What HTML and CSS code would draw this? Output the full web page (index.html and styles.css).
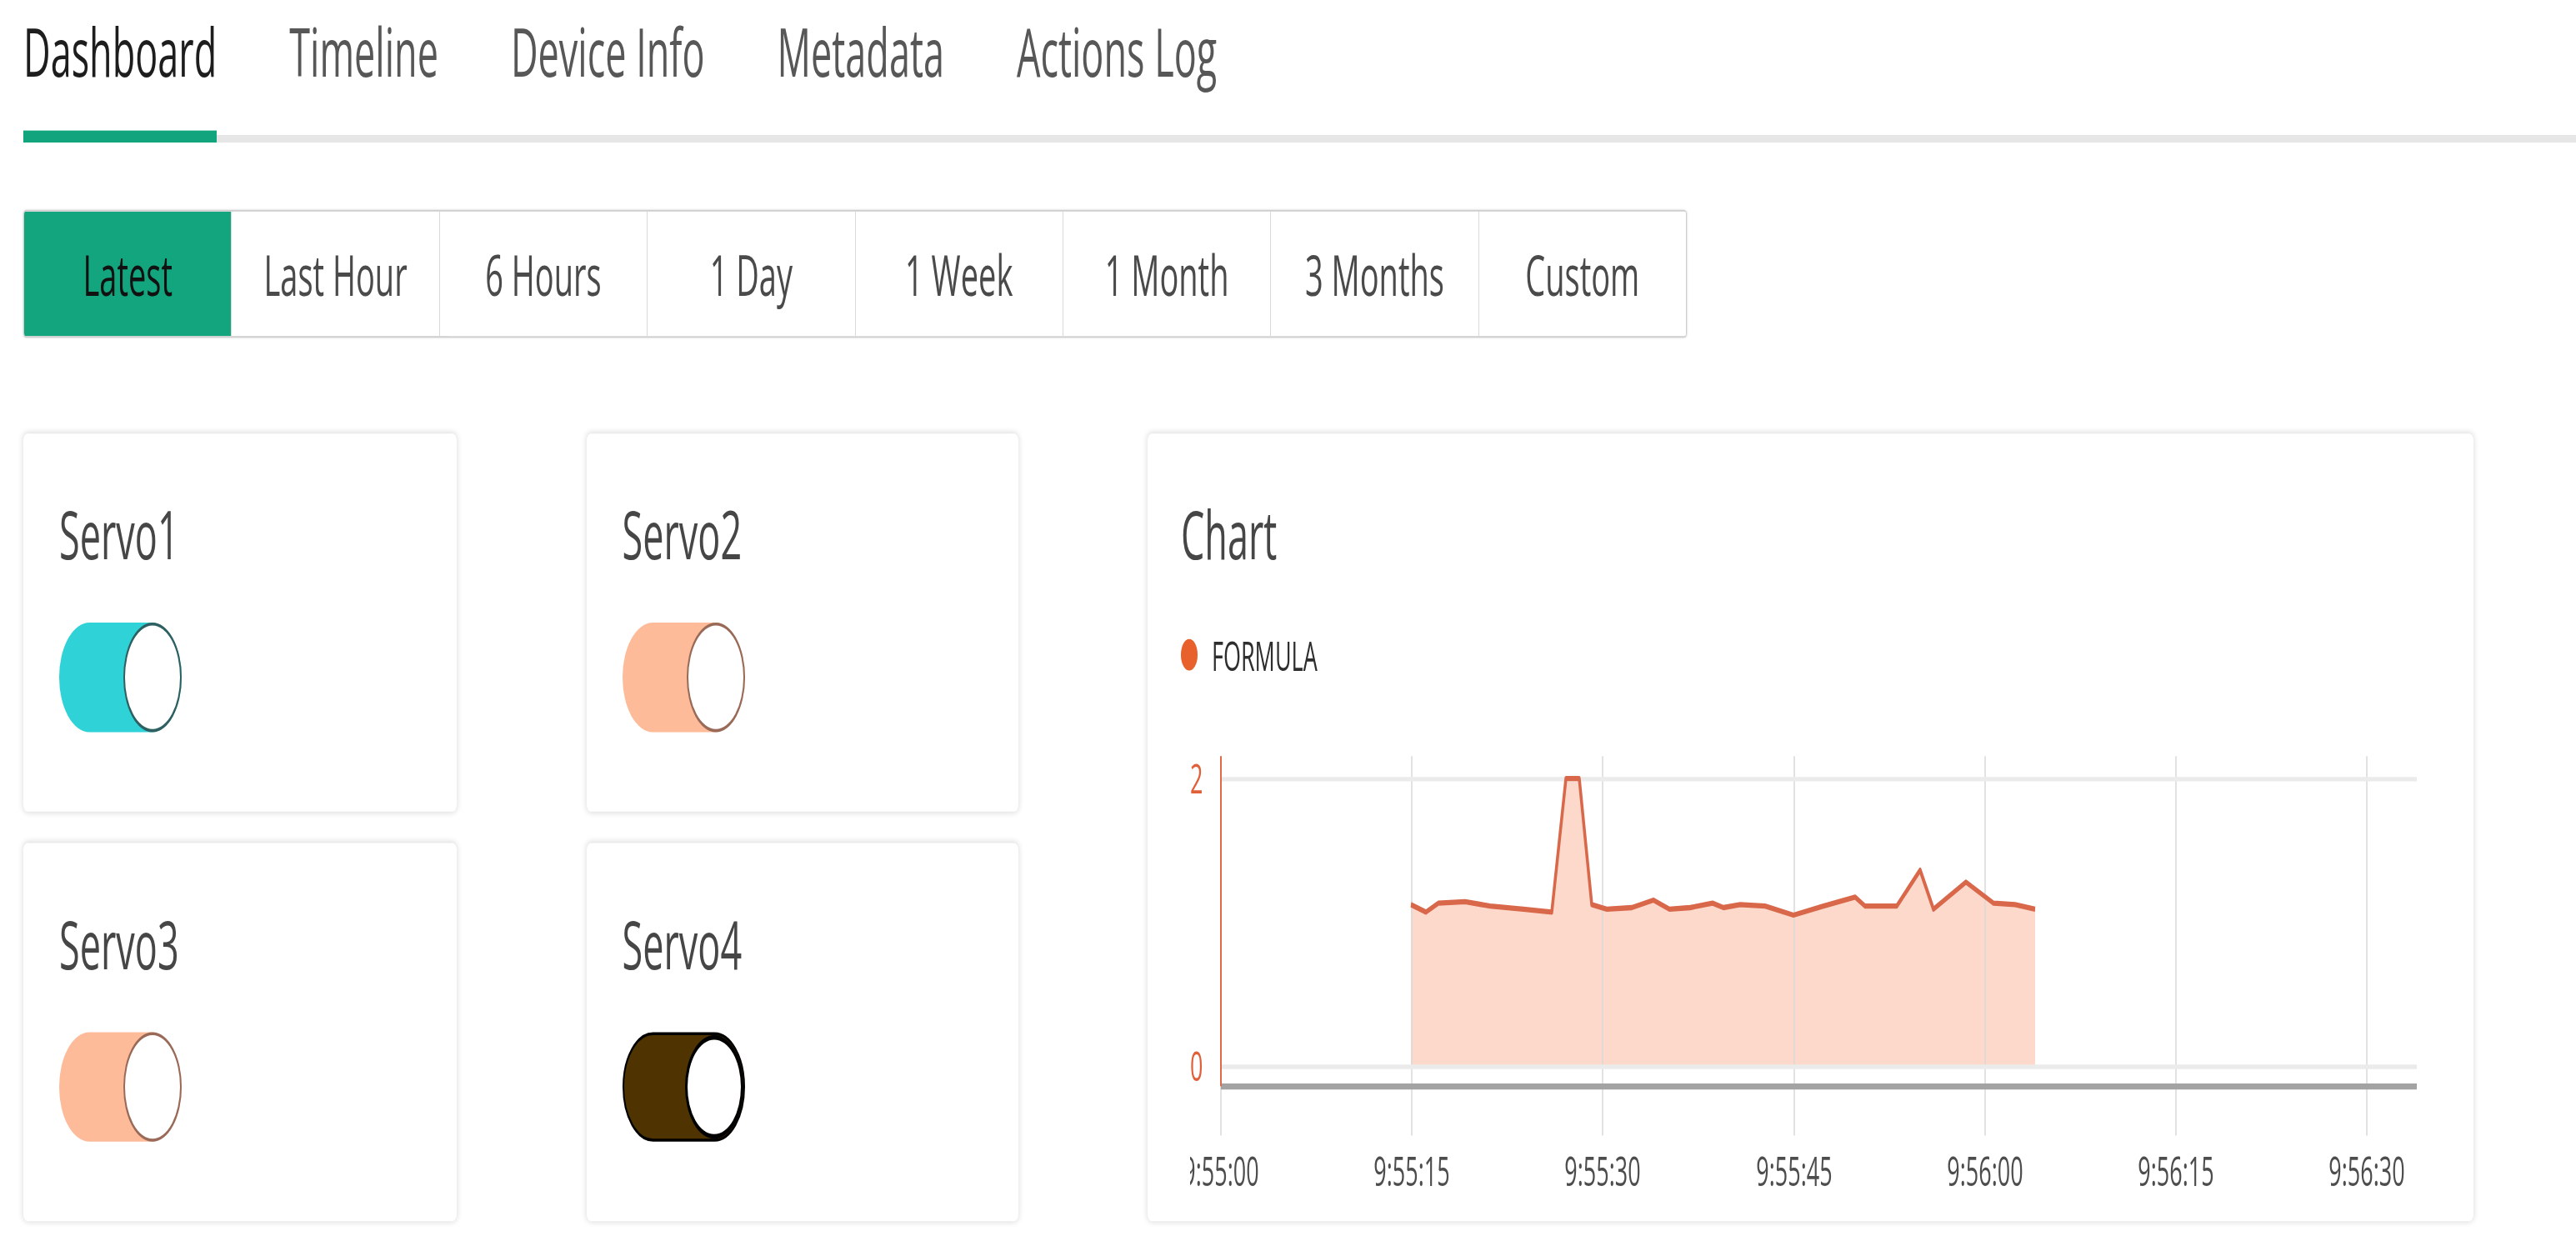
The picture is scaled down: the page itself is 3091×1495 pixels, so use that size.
FILE: index.html
```html
<!DOCTYPE html>
<html lang="en">
<head>
<meta charset="utf-8">
<title>Dashboard</title>
<link rel="stylesheet" href="styles.css">
</head>
<body>
<div class="screen">
<div class="page">
  <nav class="tabs">
    <a class="tab active">Dashboard</a>
    <a class="tab">Timeline</a>
    <a class="tab">Device Info</a>
    <a class="tab">Metadata</a>
    <a class="tab">Actions Log</a>
  </nav>

  <div class="ranges">
    <button class="range active">Latest</button>
    <button class="range">Last Hour</button>
    <button class="range">6 Hours</button>
    <button class="range">1 Day</button>
    <button class="range">1 Week</button>
    <button class="range">1 Month</button>
    <button class="range">3 Months</button>
    <button class="range">Custom</button>
  </div>

  <section class="grid">
    <div class="card servo">
      <h3 class="title">Servo1</h3>
      <div class="toggle cyan"><span class="knob"></span></div>
    </div>
    <div class="card servo">
      <h3 class="title">Servo2</h3>
      <div class="toggle peach"><span class="knob"></span></div>
    </div>
    <div class="card chart">
      <h3 class="title">Chart</h3>
      <div class="legend"><span class="dot"></span><span class="legend-label">FORMULA</span></div>
      <svg class="plot" width="1500" height="310" viewBox="0 0 1500 310">
        <path class="area" d="M265,216.1 L265,108 L283,113 L298,107 L330,106 L360,109 L400,111 L434,113 L451,24 L467,24 L482,108 L500,111 L530,110 L556,105 L575,111 L600,110 L627,107 L640,110 L660,108 L690,109 L724,115 L760,109 L798,103 L810,109 L848,109 L876,85 L892,111 L931,93 L964,107 L990,108 L1014,111 L1014,216.1 Z"/>
        <g class="vgrid">
          <line x1="37" y1="9" x2="37" y2="262"/>
          <line x1="266" y1="9" x2="266" y2="262"/>
          <line x1="495" y1="9" x2="495" y2="262"/>
          <line x1="725" y1="9" x2="725" y2="262"/>
          <line x1="954" y1="9" x2="954" y2="262"/>
          <line x1="1183" y1="9" x2="1183" y2="262"/>
          <line x1="1412" y1="9" x2="1412" y2="262"/>
        </g>
        <line class="hgrid" x1="37" y1="24.4" x2="1472" y2="24.4"/>
        <line class="hgrid" x1="37" y1="216.1" x2="1472" y2="216.1"/>
        <polyline class="series" points="265,108 283,113 298,107 330,106 360,109 400,111 434,113 451,24 467,24 482,108 500,111 530,110 556,105 575,111 600,110 627,107 640,110 660,108 690,109 724,115 760,109 798,103 810,109 848,109 876,85 892,111 931,93 964,107 990,108 1014,111"/>
        <line class="xaxis" x1="37" y1="229.2" x2="1472" y2="229.2"/>
        <line class="yaxis" x1="37" y1="9" x2="37" y2="229"/>
        <text class="ylabel" x="0" y="34">2</text>
        <text class="ylabel" x="0" y="225.7">0</text>
        <g class="xlabels">
          <text x="37" y="295.6">9:55:00</text>
          <text x="266" y="295.6">9:55:15</text>
          <text x="495" y="295.6">9:55:30</text>
          <text x="725" y="295.6">9:55:45</text>
          <text x="954" y="295.6">9:56:00</text>
          <text x="1183" y="295.6">9:56:15</text>
          <text x="1412" y="295.6">9:56:30</text>
        </g>
      </svg>
    </div>
    <div class="card servo">
      <h3 class="title">Servo3</h3>
      <div class="toggle peach"><span class="knob"></span></div>
    </div>
    <div class="card servo">
      <h3 class="title">Servo4</h3>
      <div class="toggle brown"><span class="knob"></span></div>
    </div>
  </section>
</div>
</div>
</body>
</html>
```

FILE: styles.css
```css
html, body {
  margin: 0;
  padding: 0;
  background: #ffffff;
}

body {
  font-family: "Open Sans", "Liberation Sans", sans-serif;
}

/* full-size box that holds the (vertically stretched) screen */
.screen {
  width: 3091px;
  height: 1495px;
  overflow: hidden;
}

/* the whole screen is drawn vertically stretched */
.page {
  width: 3091px;
  height: 830px;
  box-sizing: border-box;
  padding-left: 28px;
  transform: scaleY(1.8);
  transform-origin: 0 0;
}

/* ---------- tabs ---------- */
.tabs {
  display: flex;
  gap: 87px;
  padding-top: 3.5px;
  border-bottom: 5px solid #e6e6e6;
}

.tab {
  font-size: 45px;
  line-height: 60px;
  color: #575757;
  text-decoration: none;
  padding-bottom: 23.7px;
  border-bottom: 8.4px solid transparent;
  margin-bottom: -5px;
}

.tab.active {
  color: #1d1d1d;
  border-bottom-color: #12a57d;
}

/* ---------- range buttons ---------- */
.ranges {
  display: flex;
  width: 1996px;
  height: 85px;
  box-sizing: border-box;
  margin-top: 44.4px;
  border: 1px solid #cdcdcd;
  border-radius: 3px;
  box-shadow: 0 0 2px rgba(0, 0, 0, 0.22);
  overflow: hidden;
}

.range {
  flex: 1;
  display: flex;
  align-items: center;
  justify-content: center;
  padding: 0;
  margin: 0;
  border: 0;
  border-left: 1px solid #d9d9d9;
  background: #ffffff;
  font-family: "Open Sans", "Liberation Sans", sans-serif;
  font-size: 38px;
  line-height: 1;
  color: #4a4a4a;
}

.range:first-child {
  border-left: 0;
}

.range.active {
  background: #13a67e;
  color: #111111;
}

/* ---------- cards ---------- */
.grid {
  display: grid;
  grid-template-columns: 520px 518px 1591px;
  grid-template-rows: 252px 252px;
  column-gap: 155.5px;
  row-gap: 21px;
  margin-top: 64px;
}

.card {
  background: #ffffff;
  border-radius: 5px;
  box-shadow: 0 0 5px 1px rgba(0, 0, 0, 0.12);
  box-sizing: border-box;
}

.servo {
  padding: 37px 43px 0;
}

.title {
  margin: 0;
  font-size: 45px;
  line-height: 60px;
  font-weight: 400;
  color: #464646;
}

/* ---------- toggles ---------- */
.toggle {
  margin-top: 29.6px;
  width: 147px;
  height: 73px;
  box-sizing: border-box;
  border-radius: 37px;
  display: flex;
  justify-content: flex-end;
}

.knob {
  width: 70px;
  height: 100%;
  box-sizing: border-box;
  border-radius: 50%;
  background: #ffffff;
  border: 2px solid #333333;
}

.toggle.cyan {
  background: #2fd2d6;
}

.toggle.cyan .knob {
  border-color: #2e5f61;
}

.toggle.peach {
  background: #fdbb9a;
}

.toggle.peach .knob {
  border-color: #9a6a58;
}

.toggle.brown {
  background: #4f3300;
  border: 2px solid #000000;
}

.toggle.brown .knob {
  border: 3px solid #000000;
}

/* ---------- chart ---------- */
.chart {
  grid-row: span 2;
  padding: 37px 40px 0;
}

.legend {
  display: flex;
  align-items: center;
  gap: 17px;
  height: 23px;
  margin-top: 39px;
}

.dot {
  width: 20px;
  height: 21px;
  border-radius: 50%;
  background: #e8602c;
}

.legend-label {
  font-size: 27px;
  line-height: 23px;
  color: #2e2e2e;
}

.plot {
  display: block;
  margin: 47px 0 0 11px;
  overflow: hidden;
}

.area {
  fill: #fdd9cc;
}

.vgrid line {
  stroke: #d9d9d9;
  stroke-width: 1.5;
}

.hgrid {
  stroke: #ebebeb;
  stroke-width: 3;
}

.series {
  fill: none;
  stroke: #d9674a;
  stroke-width: 3.5;
  stroke-linejoin: round;
}

.xaxis {
  stroke: #a3a3a3;
  stroke-width: 4;
}

.yaxis {
  stroke: #e06a48;
  stroke-width: 2;
}

.ylabel {
  font-family: "Open Sans", "Liberation Sans", sans-serif;
  font-size: 27px;
  fill: #e0603a;
}

.xlabels text {
  font-family: "Open Sans", "Liberation Sans", sans-serif;
  font-size: 27px;
  fill: #4d4d4d;
  text-anchor: middle;
}
```
